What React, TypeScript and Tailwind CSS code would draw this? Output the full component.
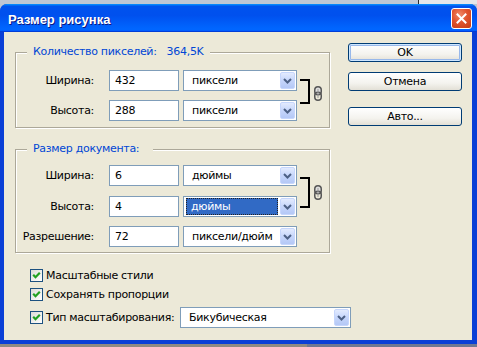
import React from "react";

function Chevron() {
  return (
    <svg width="9" height="6" viewBox="0 0 9 6">
      <path d="M1 1 L4.5 4.5 L8 1" stroke="#4d6185" strokeWidth="2" fill="none" />
    </svg>
  );
}

function Select({
  value,
  className,
  selected,
}: {
  value: string;
  className: string;
  selected?: boolean;
}) {
  return (
    <div className={`flex h-[21px] shrink-0 items-stretch border border-[#7f9db9] bg-white p-px ${className}`}>
      <div className="flex flex-1 items-center pl-[1px] pr-[2px]">
        {selected ? (
          <div className="flex h-[17px] flex-1 items-center border border-dotted border-[#222] bg-[#316ac5] pl-[4px] text-white">
            {value}
          </div>
        ) : (
          <div className="pl-[6px]">{value}</div>
        )}
      </div>
      <div className="flex w-[15px] items-center justify-center rounded-[2px] border border-[#c6d6fc] bg-[linear-gradient(180deg,#e3ebfe_0%,#c6d6fb_50%,#b4c8f6_100%)]">
        <Chevron />
      </div>
    </div>
  );
}

function Row({
  label,
  value,
  unit,
  selected,
  className = "",
}: {
  label: string;
  value: string;
  unit: string;
  selected?: boolean;
  className?: string;
}) {
  return (
    <div className={`flex h-[21px] items-center ${className}`}>
      <div className="w-[78px] text-right">{label}</div>
      <div className="ml-[15px] flex h-[21px] w-[70px] items-center border border-[#7f9db9] bg-white pl-[5px]">
        {value}
      </div>
      <Select className="ml-[4px] w-[114px]" value={unit} selected={selected} />
    </div>
  );
}

function Chain() {
  return (
    <svg width="8" height="15" viewBox="0 0 8 15">
      <rect x="0.75" y="0.75" width="6.5" height="8" rx="3.25" fill="#e0e0e0" stroke="#555" strokeWidth="1.5" />
      <rect x="0.75" y="6.25" width="6.5" height="8" rx="3.25" fill="none" stroke="#555" strokeWidth="1.5" />
      <line x1="4" y1="3" x2="4" y2="12" stroke="#9a9a9a" strokeWidth="1" />
    </svg>
  );
}

function Check() {
  return (
    <div className="flex h-[13px] w-[13px] shrink-0 items-center justify-center border border-[#1c5180] bg-[linear-gradient(135deg,#dcdcd7_0%,#ffffff_100%)]">
      <svg width="9" height="9" viewBox="0 0 9 9">
        <path d="M1.2 3.8 L3.5 6.2 L7.8 1.8" stroke="#21a121" strokeWidth="2.2" fill="none" />
      </svg>
    </div>
  );
}

function Button({ children, isDefault, className = "" }: { children: React.ReactNode; isDefault?: boolean; className?: string }) {
  return (
    <div
      className={`flex h-[19px] w-[114px] items-center justify-center rounded-[3px] border border-[#003c74] bg-[linear-gradient(180deg,#ffffff_0%,#f4f3ee_60%,#e3e0d6_100%)] ${
        isDefault ? "shadow-[inset_0_0_0_1px_#cee7ff,inset_0_0_0_2px_#98b8ea]" : ""
      } ${className}`}
    >
      {children}
    </div>
  );
}

export default function App() {
  return (
    <div className="flex h-[347px] w-[477px] flex-col overflow-hidden whitespace-nowrap bg-[#bcc5d3] font-['DejaVu_Sans',sans-serif] text-[11px] leading-[13px] tracking-[-0.3px] text-black">
      <div className="flex h-[4px] shrink-0">
        <div className="w-[418px] bg-[#bfc7d4]" />
        <div className="w-px bg-[#2a2a2a]" />
        <div className="flex-1 bg-[#e4e6ea]" />
      </div>
      <div className="flex h-[340px] shrink-0 flex-col rounded-t-[7px] bg-[#0a3fd6]">
        <div className="flex h-[28px] shrink-0 items-center rounded-t-[7px] bg-[linear-gradient(180deg,#0997ff_0%,#0053ee_8%,#0050ee_40%,#0066ff_88%,#0066ff_93%,#005bff_95%,#003dd7_96%,#003dd7_100%)] pl-[8px] pr-[5px]">
          <span className="flex-1 pt-[3px] font-['Liberation_Sans',sans-serif] text-[13px] font-bold leading-[15px] tracking-normal text-white [text-shadow:1px_1px_0_#0a1883]">
            Размер рисунка
          </span>
          <div className="flex h-[21px] w-[21px] items-center justify-center rounded-[3px] border border-white bg-[radial-gradient(circle_at_40%_30%,#f08a6a_0%,#e0532e_45%,#c43b14_100%)]">
            <svg width="11" height="11" viewBox="0 0 11 11">
              <path d="M1.5 1.5 L9.5 9.5 M9.5 1.5 L1.5 9.5" stroke="#fff" strokeWidth="2" strokeLinecap="square" />
            </svg>
          </div>
        </div>
        <div className="flex flex-1 pb-[4px] pl-[4px] pr-[5px]">
          <div className="flex flex-1 bg-[#ece9d8]">
            {/* left column */}
            <div className="flex w-[326px] shrink-0 flex-col pl-[11px]">
              <div className="relative mt-[20px] w-[315px] border border-[#aca899] pb-[6px] pt-[17px] shadow-[inset_1px_1px_0_#fff,1px_1px_0_#fff]">
                <span className="absolute left-[11px] top-[-8px] bg-[#ece9d8] px-[6px] leading-[14px] text-[#0046d5]">
                  Количество пикселей:<span className="ml-[10px]">364,5K</span>
                </span>
                <div className="flex">
                  <div className="flex flex-col gap-[9px]">
                    <Row label="Ширина:" value="432" unit="пиксели" />
                    <Row label="Высота:" value="288" unit="пиксели" />
                  </div>
                  <div className="ml-[3px] mt-[9px] h-[25px] w-[10px] border-y-2 border-r-2 border-black" />
                  <div className="ml-[4px] mt-[16px]">
                    <Chain />
                  </div>
                </div>
              </div>

              <div className="relative mt-[21px] w-[315px] border border-[#aca899] pb-[5px] pt-[15px] shadow-[inset_1px_1px_0_#fff,1px_1px_0_#fff]">
                <span className="absolute left-[11px] top-[-8px] bg-[#ece9d8] pl-[6px] pr-[14px] leading-[14px] text-[#0046d5]">
                  Размер документа:
                </span>
                <div className="flex">
                  <div className="flex flex-col">
                    <Row label="Ширина:" value="6" unit="дюймы" />
                    <Row label="Высота:" value="4" unit="дюймы" selected className="mt-[10px]" />
                    <Row label="Разрешение:" value="72" unit="пиксели/дюйм" className="mt-[9px]" />
                  </div>
                  <div className="ml-[3px] mt-[12px] h-[31px] w-[10px] border-y-2 border-r-2 border-black" />
                  <div className="ml-[4px] mt-[20px]">
                    <Chain />
                  </div>
                </div>
              </div>

              <div className="ml-[15px] mt-[15px] flex h-[14px] items-center gap-[3px]">
                <Check />
                <span>Масштабные стили</span>
              </div>
              <div className="ml-[15px] mt-[5px] flex h-[14px] items-center gap-[3px]">
                <Check />
                <span>Сохранять пропорции</span>
              </div>
              <div className="ml-[15px] mt-[6px] flex h-[21px] w-[330px] items-center">
                <Check />
                <span className="ml-[3px] w-[134px] shrink-0">Тип масштабирования:</span>
                <Select className="w-[171px]" value="Бикубическая" />
              </div>
            </div>

            {/* right column */}
            <div className="ml-[18px] flex flex-col">
              <Button isDefault className="mt-[11px]">OK</Button>
              <Button className="mt-[10px]">Отмена</Button>
              <Button className="mt-[16px]">Авто...</Button>
            </div>
          </div>
        </div>
      </div>
      <div className="flex flex-1">
        <div className="w-[307px] bg-[#8f8a82]" />
        <div className="flex-1 bg-[#6f7892]" />
      </div>
    </div>
  );
}
